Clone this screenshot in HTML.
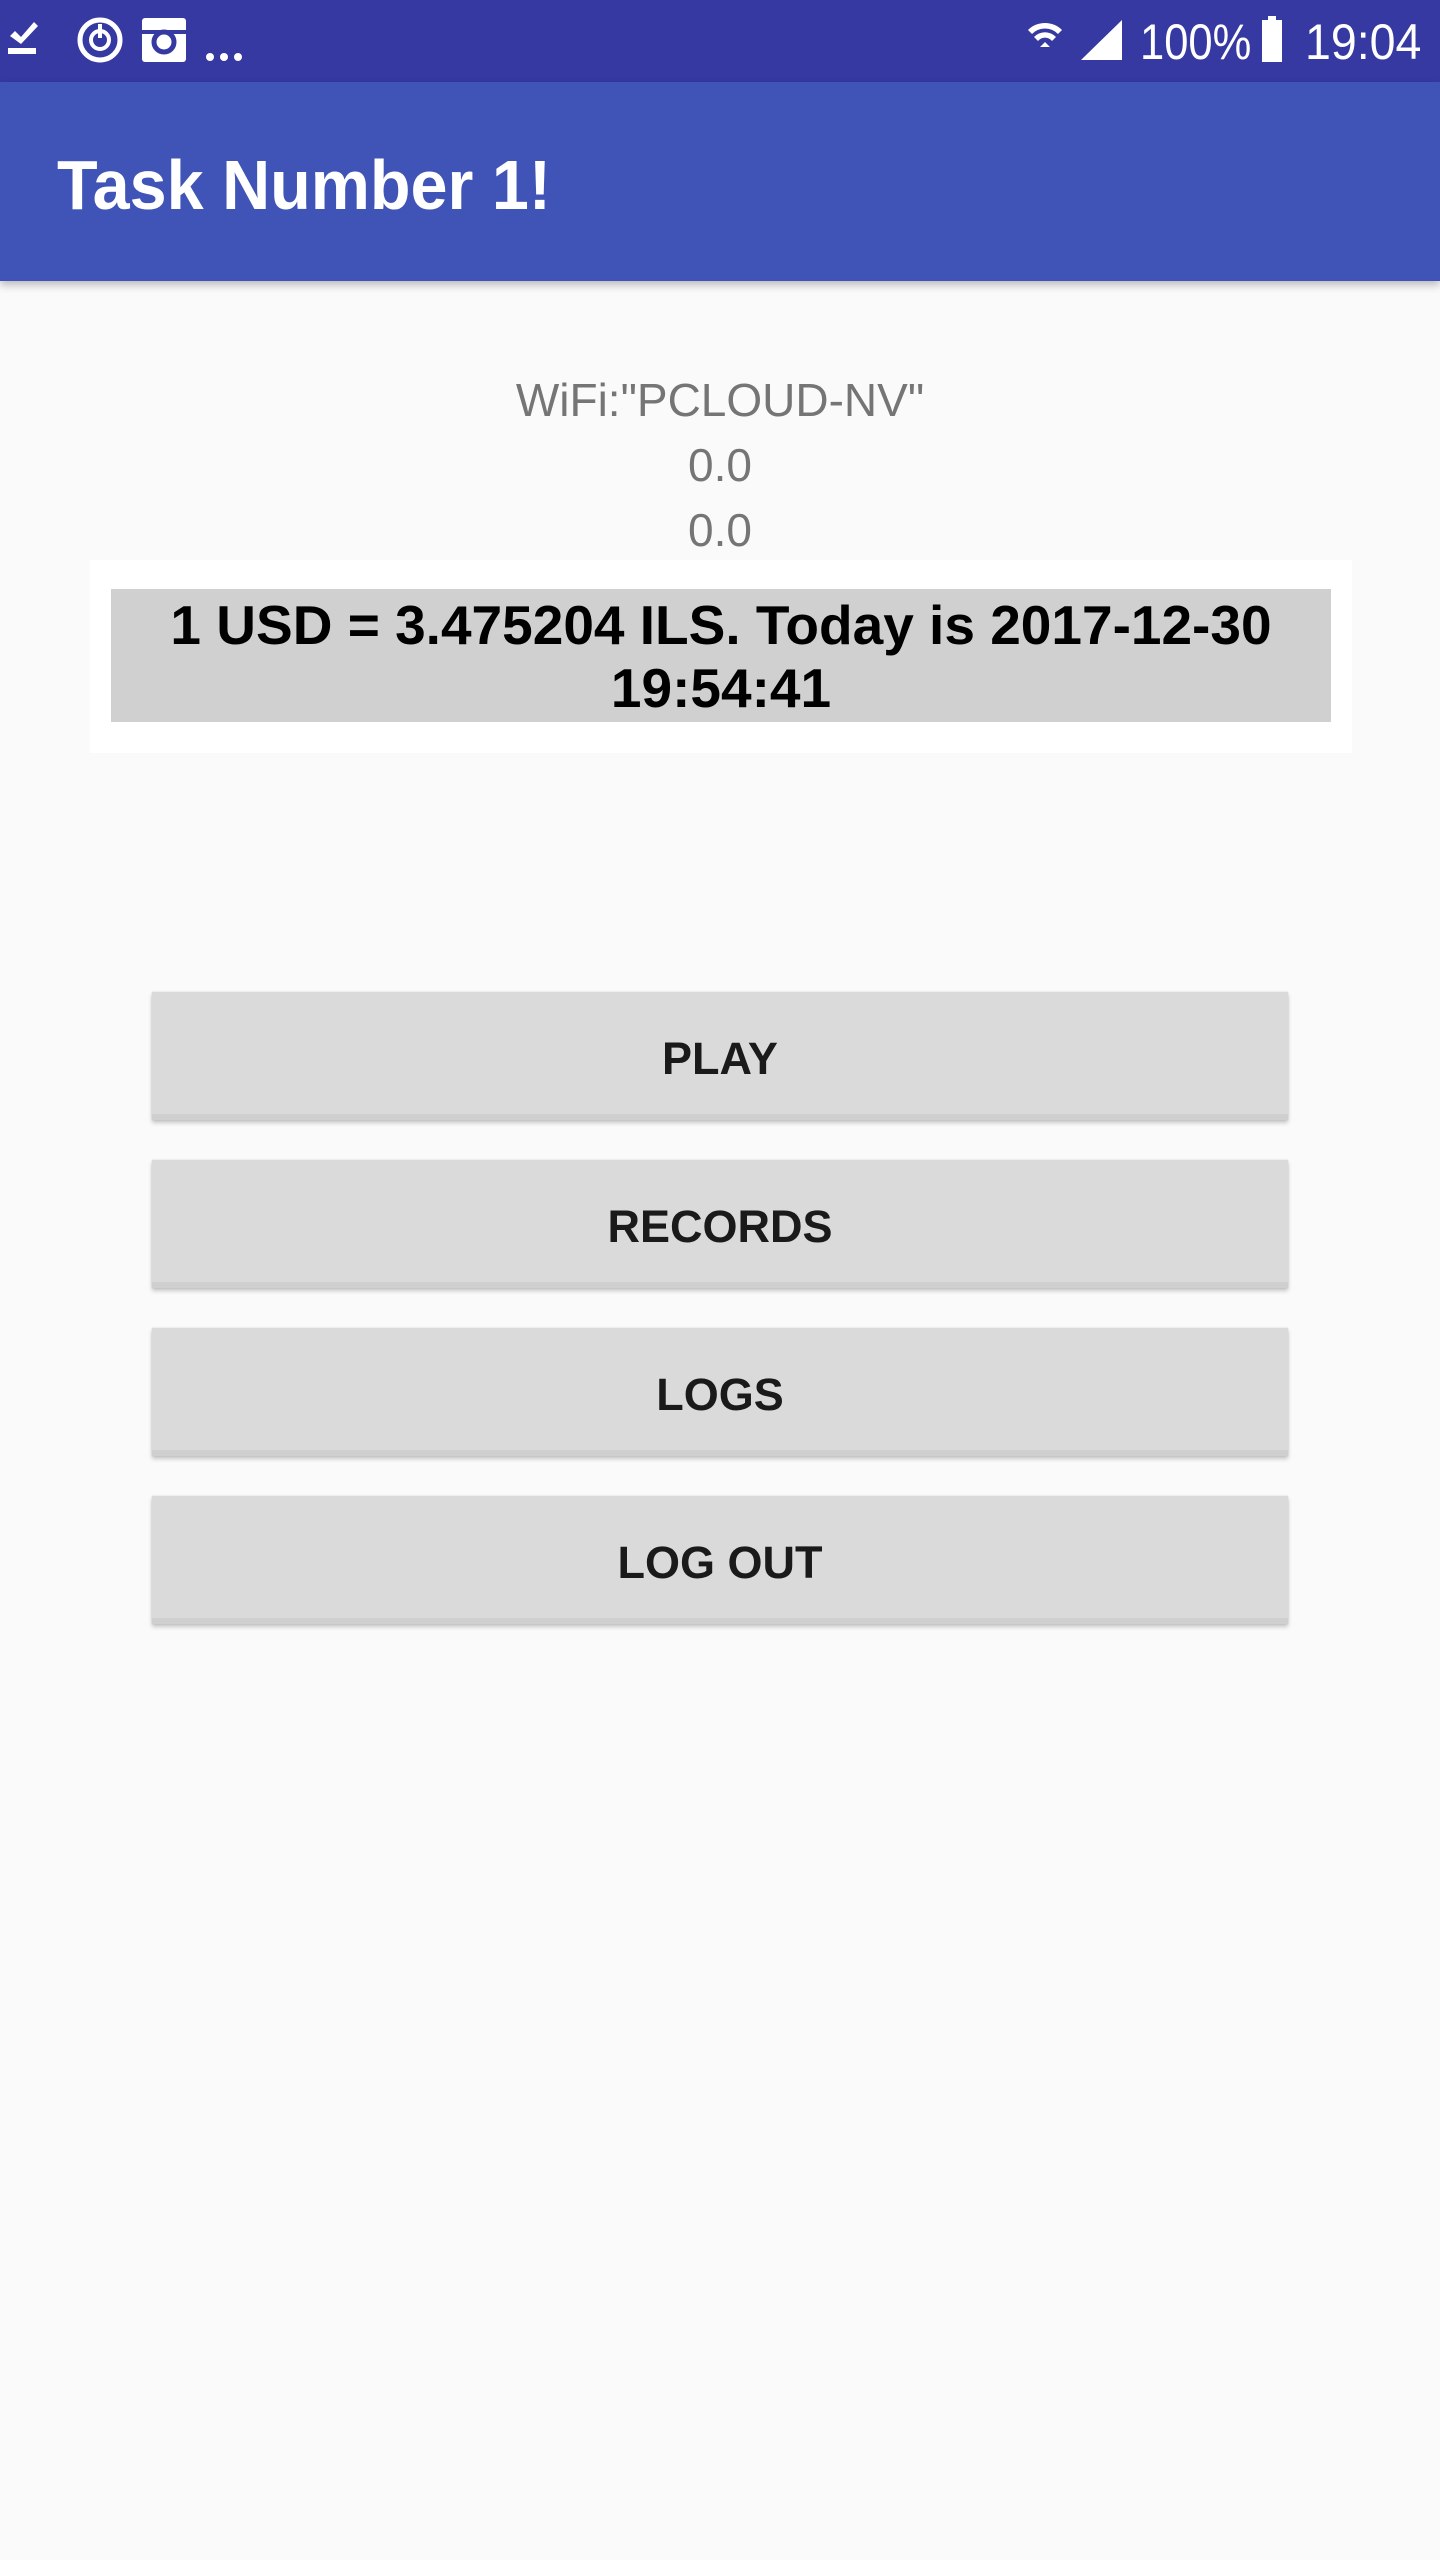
<!DOCTYPE html>
<html><head><meta charset="utf-8"><style>
*{margin:0;padding:0;box-sizing:border-box}
body{width:1440px;height:2560px;background:#fafafa;font-family:"Liberation Sans",sans-serif;position:relative;overflow:hidden}
.sb{position:absolute;left:0;top:0;width:1440px;height:82px;background:#3539a1;color:#fff}
.ab{position:absolute;left:0;top:82px;width:1440px;height:199px;background:#3f54b6;box-shadow:0 4px 8px rgba(0,0,0,.25)}
.title{position:absolute;left:57px;top:145px;font-size:70px;font-weight:bold;color:#fff;transform:scaleX(.95);transform-origin:left;white-space:nowrap;line-height:80px}
.info{position:absolute;left:0;width:1440px;top:368px;text-align:center;color:#757575;font-size:46px;line-height:65px}
.wbox{position:absolute;left:90px;top:560px;width:1262px;height:193px;background:#fff}
.gbox{position:absolute;left:111px;top:589px;width:1220px;height:133px;background:#d0d0d0;text-align:center;font-weight:bold;font-size:55px;line-height:63px;padding-top:5px;color:#000}
.btn{position:absolute;left:152px;width:1136px;height:128px;background:#dadada;border-bottom:6px solid #cfcfcf;box-shadow:0 3px 4px rgba(0,0,0,.2),0 0 2px rgba(0,0,0,.12);text-align:center;font-weight:bold;font-size:45px;line-height:122px;padding-top:6px;color:#1a1a1a}
</style></head><body>
<div class="sb">
<svg width="1440" height="82" style="position:absolute;left:0;top:0" fill="#fff">
<path d="M10 36 l5 -5 l6 6 l13 -15 l4 4 l-17 18z"/><rect x="8" y="48" width="28" height="6"/>
<circle cx="100" cy="40" r="20" fill="none" stroke="#fff" stroke-width="5"/><circle cx="100" cy="40" r="9" fill="none" stroke="#fff" stroke-width="4"/><rect x="98" y="24" width="4" height="14"/>
<rect x="142" y="18" width="44" height="44" rx="3"/><circle cx="164" cy="42" r="10" fill="none" stroke="#3539a1" stroke-width="5"/><rect x="142" y="30" width="44" height="4" fill="#3539a1"/>
<circle cx="210" cy="57" r="4"/><circle cx="224" cy="57" r="4"/><circle cx="238" cy="57" r="4"/>
<path d="M1028 30 a24 24 0 0 1 34 0 l-4 4 a18 18 0 0 0 -26 0z M1034 37 a15 15 0 0 1 22 0 l-4 4 a9 9 0 0 0 -14 0z M1045 42 l5 5 h-10z"/>
<path d="M1081 60 L1122 20 L1122 60z"/>
</svg>
<div style="position:absolute;left:1140px;top:14px;font-size:50px;line-height:56px;transform:scaleX(.87);transform-origin:left">100%</div>
<div style="position:absolute;left:1262px;top:20px;width:20px;height:42px;background:#fff"></div>
<div style="position:absolute;left:1268px;top:16px;width:8px;height:6px;background:#fff"></div>
<div style="position:absolute;left:1305px;top:14px;font-size:50px;line-height:56px;transform:scaleX(.93);transform-origin:left">19:04</div>
</div>
<div class="ab"></div>
<div class="title">Task Number 1!</div>
<div class="info">WiFi:"PCLOUD-NV"<br>0.0<br>0.0</div>
<div class="wbox"></div>
<div class="gbox">1 USD = 3.475204 ILS. Today is 2017-12-30<br>19:54:41</div>
<div class="btn" style="top:992px">PLAY</div>
<div class="btn" style="top:1160px">RECORDS</div>
<div class="btn" style="top:1328px">LOGS</div>
<div class="btn" style="top:1496px">LOG OUT</div>
</body></html>
